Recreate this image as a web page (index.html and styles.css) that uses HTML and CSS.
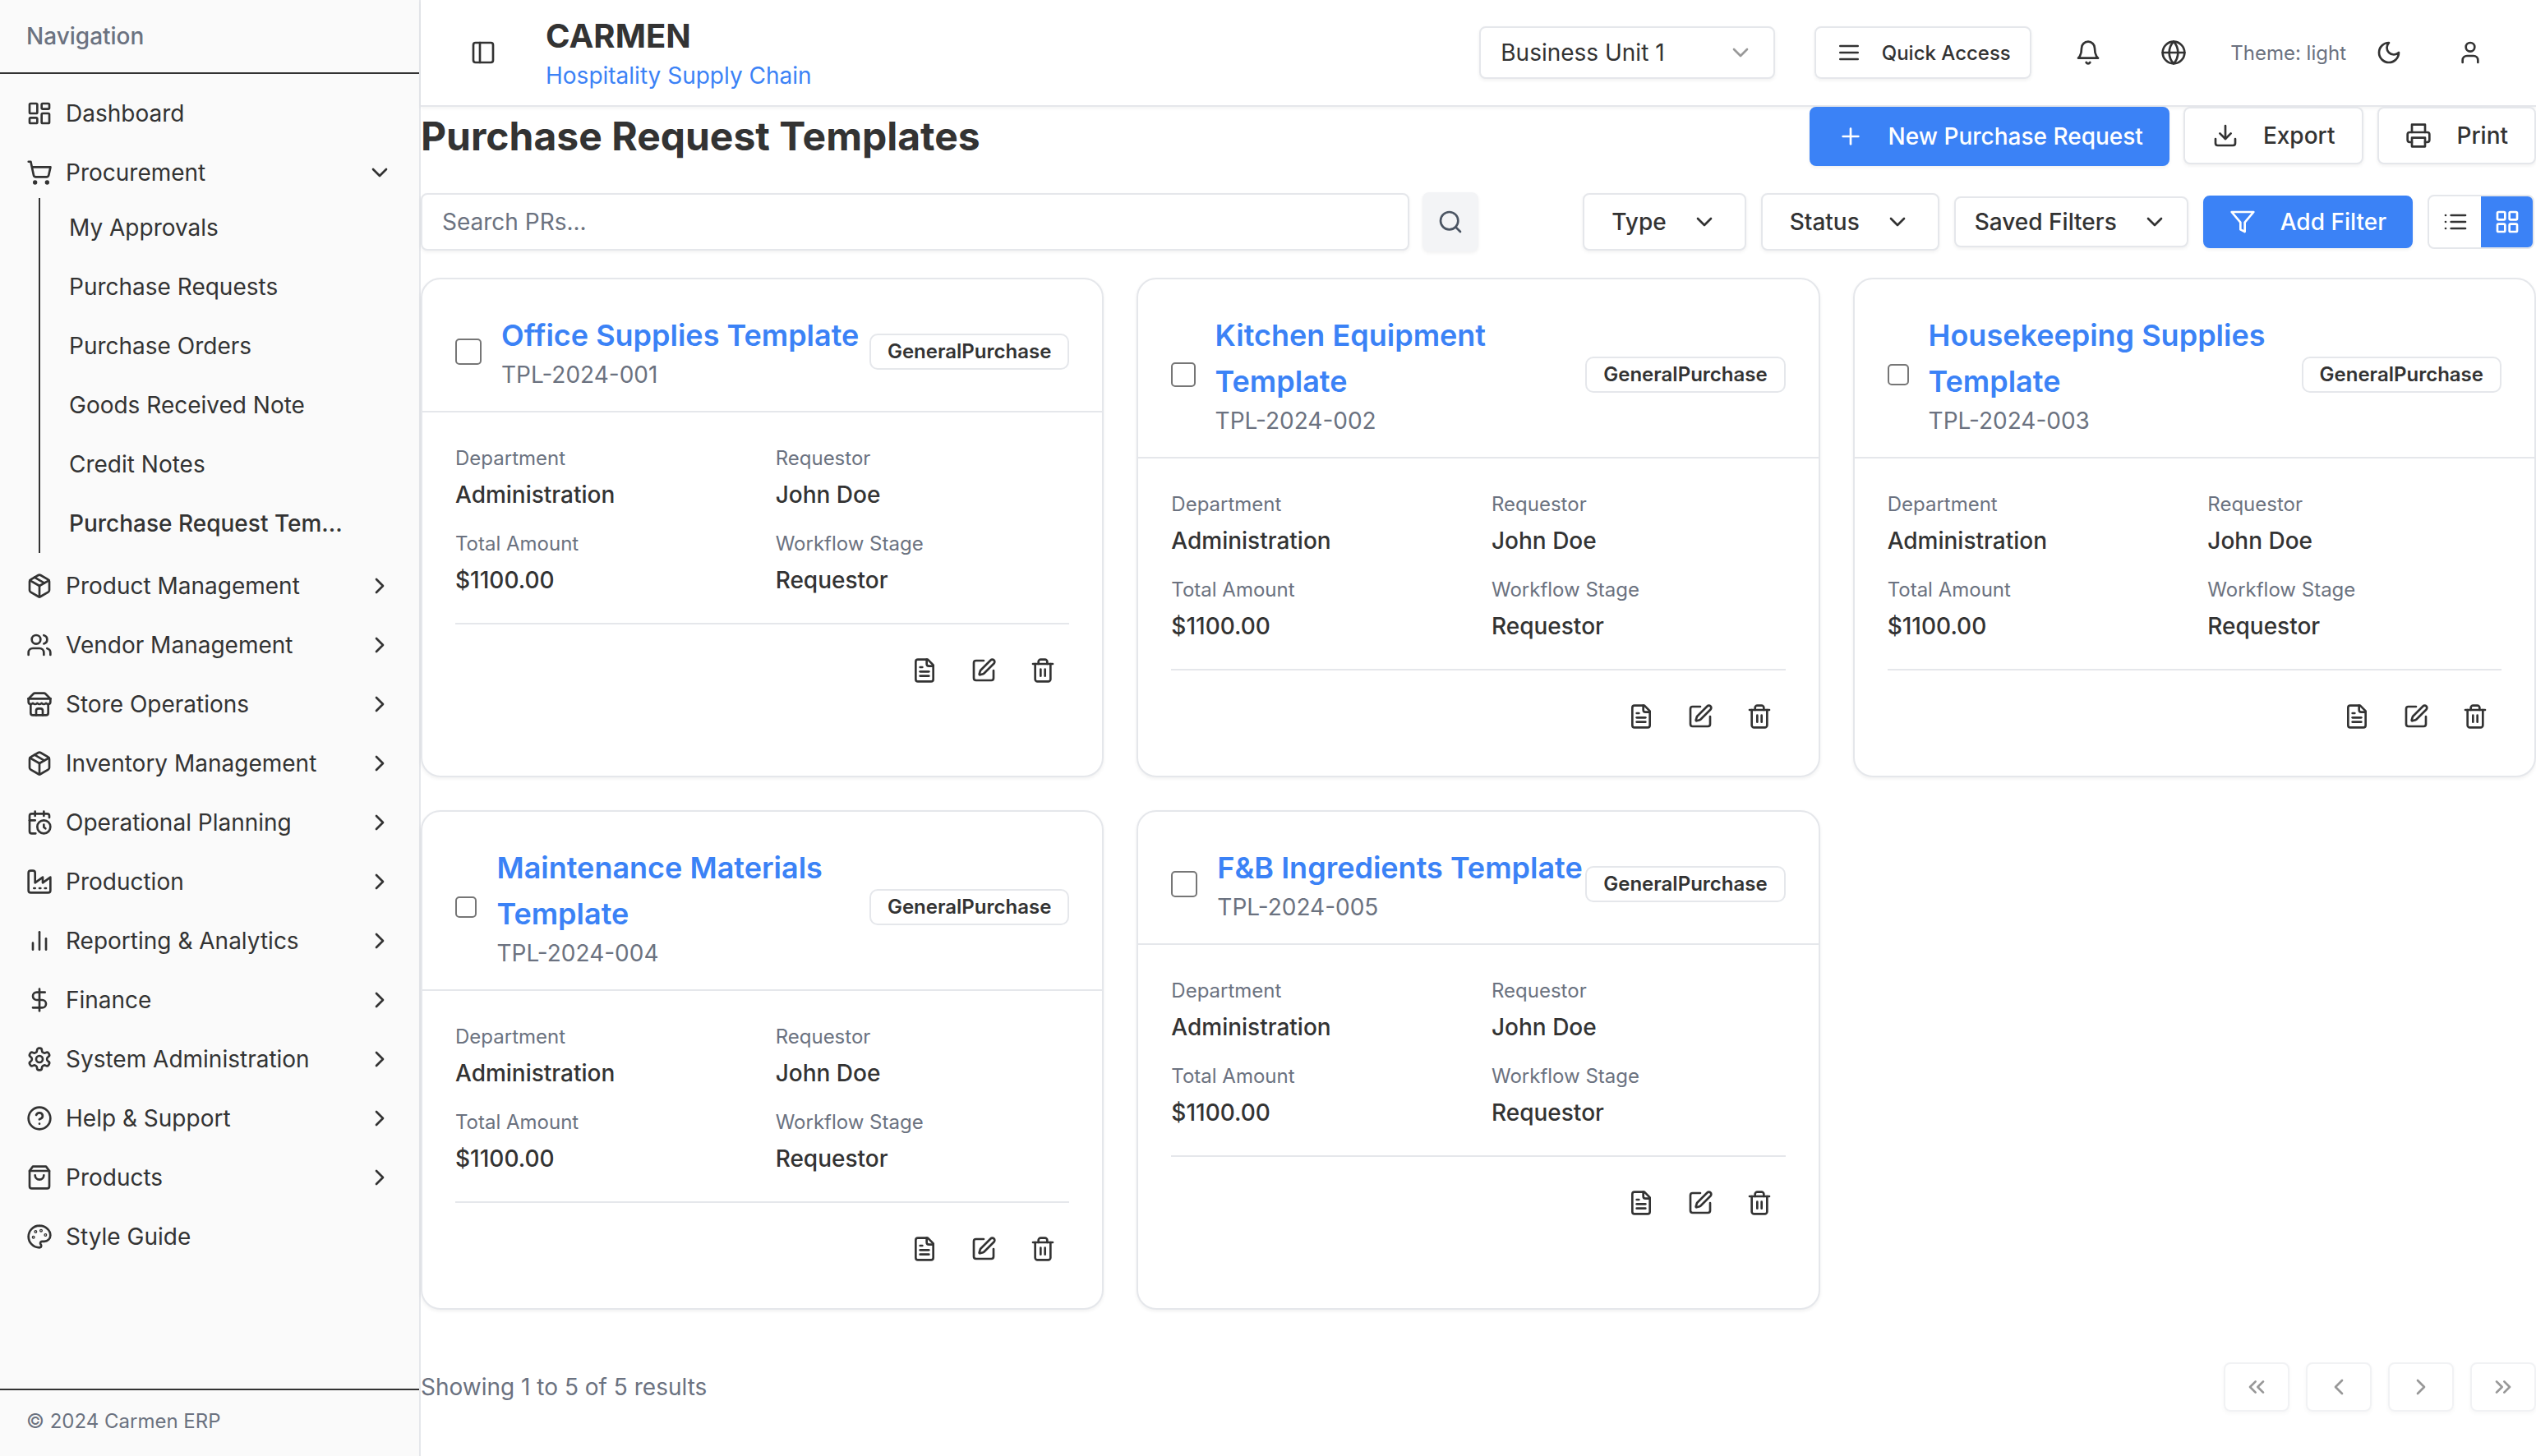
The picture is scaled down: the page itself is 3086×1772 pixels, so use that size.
FILE: index.html
```html
<!DOCTYPE html>
<html lang="en">
<head>
  <meta charset="UTF-8" />
  <title>Purchase Request Templates - Carmen</title>
  <link rel="stylesheet" href="styles.css">
</head>
<body>
  <svg class="sprite" xmlns="http://www.w3.org/2000/svg">
    <symbol id="i-dashboard" viewBox="0 0 24 24"><rect x="3" y="3" width="7" height="9" rx="1"/><rect x="14" y="3" width="7" height="5" rx="1"/><rect x="14" y="12" width="7" height="9" rx="1"/><rect x="3" y="16" width="7" height="5" rx="1"/></symbol>
    <symbol id="i-cart" viewBox="0 0 24 24"><circle cx="8" cy="21" r="1"/><circle cx="19" cy="21" r="1"/><path d="M2.05 2.05h2l2.66 12.42a2 2 0 0 0 2 1.58h9.78a2 2 0 0 0 1.95-1.57l1.65-7.43H5.12"/></symbol>
    <symbol id="i-down" viewBox="0 0 24 24"><path d="m6 9 6 6 6-6"/></symbol>
    <symbol id="i-right" viewBox="0 0 24 24"><path d="m9 18 6-6-6-6"/></symbol>
    <symbol id="i-left" viewBox="0 0 24 24"><path d="m15 18-6-6 6-6"/></symbol>
    <symbol id="i-first" viewBox="0 0 24 24"><path d="m11 17-5-5 5-5"/><path d="m18 17-5-5 5-5"/></symbol>
    <symbol id="i-last" viewBox="0 0 24 24"><path d="m6 17 5-5-5-5"/><path d="m13 17 5-5-5-5"/></symbol>
    <symbol id="i-package" viewBox="0 0 24 24"><path d="m7.5 4.27 9 5.15"/><path d="M21 8a2 2 0 0 0-1-1.73l-7-4a2 2 0 0 0-2 0l-7 4A2 2 0 0 0 3 8v8a2 2 0 0 0 1 1.73l7 4a2 2 0 0 0 2 0l7-4A2 2 0 0 0 21 16Z"/><path d="m3.3 7 8.7 5 8.7-5"/><path d="M12 22V12"/></symbol>
    <symbol id="i-users" viewBox="0 0 24 24"><path d="M16 21v-2a4 4 0 0 0-4-4H6a4 4 0 0 0-4 4v2"/><circle cx="9" cy="7" r="4"/><path d="M22 21v-2a4 4 0 0 0-3-3.87"/><path d="M16 3.13a4 4 0 0 1 0 7.75"/></symbol>
    <symbol id="i-store" viewBox="0 0 24 24"><path d="m2 7 4.41-4.41A2 2 0 0 1 7.83 2h8.34a2 2 0 0 1 1.42.59L22 7"/><path d="M4 12v8a2 2 0 0 0 2 2h12a2 2 0 0 0 2-2v-8"/><path d="M15 22v-4a2 2 0 0 0-2-2h-2a2 2 0 0 0-2 2v4"/><path d="M2 7h20"/><path d="M22 7v3a2 2 0 0 1-2 2a2.7 2.7 0 0 1-1.59-.63.7.7 0 0 0-.82 0A2.7 2.7 0 0 1 16 12a2.7 2.7 0 0 1-1.59-.63.7.7 0 0 0-.82 0A2.7 2.7 0 0 1 12 12a2.7 2.7 0 0 1-1.59-.63.7.7 0 0 0-.82 0A2.7 2.7 0 0 1 8 12a2.7 2.7 0 0 1-1.59-.63.7.7 0 0 0-.82 0A2.7 2.7 0 0 1 4 12a2 2 0 0 1-2-2V7"/></symbol>
    <symbol id="i-calendar" viewBox="0 0 24 24"><path d="M21 7.5V6a2 2 0 0 0-2-2H5a2 2 0 0 0-2 2v14a2 2 0 0 0 2 2h3.5"/><path d="M16 2v4"/><path d="M8 2v4"/><path d="M3 10h5"/><path d="M17.5 17.5 16 16.3V14"/><circle cx="16" cy="16" r="6"/></symbol>
    <symbol id="i-factory" viewBox="0 0 24 24"><path d="M2 20a2 2 0 0 0 2 2h16a2 2 0 0 0 2-2V8l-7 5V8l-7 5V4a2 2 0 0 0-2-2H4a2 2 0 0 0-2 2Z"/><path d="M17 18h1"/><path d="M12 18h1"/><path d="M7 18h1"/></symbol>
    <symbol id="i-chart" viewBox="0 0 24 24"><path d="M18 20V10"/><path d="M12 20V4"/><path d="M6 20v-6"/></symbol>
    <symbol id="i-dollar" viewBox="0 0 24 24"><path d="M12 2v20"/><path d="M17 5H9.5a3.5 3.5 0 0 0 0 7h5a3.5 3.5 0 0 1 0 7H6"/></symbol>
    <symbol id="i-settings" viewBox="0 0 24 24"><path d="M12.22 2h-.44a2 2 0 0 0-2 2v.18a2 2 0 0 1-1 1.73l-.43.25a2 2 0 0 1-2 0l-.15-.08a2 2 0 0 0-2.73.73l-.22.38a2 2 0 0 0 .73 2.73l.15.1a2 2 0 0 1 1 1.72v.51a2 2 0 0 1-1 1.74l-.15.09a2 2 0 0 0-.73 2.73l.22.38a2 2 0 0 0 2.73.73l.15-.08a2 2 0 0 1 2 0l.43.25a2 2 0 0 1 1 1.73V20a2 2 0 0 0 2 2h.44a2 2 0 0 0 2-2v-.18a2 2 0 0 1 1-1.73l.43-.25a2 2 0 0 1 2 0l.15.08a2 2 0 0 0 2.73-.73l.22-.39a2 2 0 0 0-.73-2.73l-.15-.08a2 2 0 0 1-1-1.74v-.5a2 2 0 0 1 1-1.74l.15-.09a2 2 0 0 0 .73-2.73l-.22-.38a2 2 0 0 0-2.73-.73l-.15.08a2 2 0 0 1-2 0l-.43-.25a2 2 0 0 1-1-1.73V4a2 2 0 0 0-2-2z"/><circle cx="12" cy="12" r="3"/></symbol>
    <symbol id="i-help" viewBox="0 0 24 24"><circle cx="12" cy="12" r="10"/><path d="M9.09 9a3 3 0 0 1 5.83 1c0 2-3 3-3 3"/><path d="M12 17h.01"/></symbol>
    <symbol id="i-bag" viewBox="0 0 24 24"><path d="M6 2 3 6v14a2 2 0 0 0 2 2h14a2 2 0 0 0 2-2V6l-3-4Z"/><path d="M3 6h18"/><path d="M16 10a4 4 0 0 1-8 0"/></symbol>
    <symbol id="i-palette" viewBox="0 0 24 24"><circle cx="13.5" cy="6.5" r=".5"/><circle cx="17.5" cy="10.5" r=".5"/><circle cx="8.5" cy="7.5" r=".5"/><circle cx="6.5" cy="12.5" r=".5"/><path d="M12 2C6.5 2 2 6.5 2 12s4.5 10 10 10c.926 0 1.648-.746 1.648-1.688 0-.437-.18-.835-.437-1.125-.29-.289-.438-.652-.438-1.125a1.64 1.64 0 0 1 1.668-1.668h1.996c3.051 0 5.555-2.503 5.555-5.554C21.965 6.012 17.461 2 11.996 2z"/></symbol>
    <symbol id="i-panel" viewBox="0 0 24 24"><rect x="3" y="3" width="18" height="18" rx="2"/><path d="M9 3v18"/></symbol>
    <symbol id="i-menu" viewBox="0 0 24 24"><path d="M4 6h16"/><path d="M4 12h16"/><path d="M4 18h16"/></symbol>
    <symbol id="i-bell" viewBox="0 0 24 24"><path d="M6 8a6 6 0 0 1 12 0c0 7 3 9 3 9H3s3-2 3-9"/><path d="M10.3 21a1.94 1.94 0 0 0 3.4 0"/></symbol>
    <symbol id="i-globe" viewBox="0 0 24 24"><circle cx="12" cy="12" r="10"/><path d="M12 2a14.5 14.5 0 0 0 0 20 14.5 14.5 0 0 0 0-20"/><path d="M2 12h20"/></symbol>
    <symbol id="i-moon" viewBox="0 0 24 24"><path d="M12 3a6 6 0 0 0 9 9 9 9 0 1 1-9-9Z"/></symbol>
    <symbol id="i-user" viewBox="0 0 24 24"><path d="M19 21v-2a4 4 0 0 0-4-4H9a4 4 0 0 0-4 4v2"/><circle cx="12" cy="7" r="4"/></symbol>
    <symbol id="i-plus" viewBox="0 0 24 24"><path d="M5 12h14"/><path d="M12 5v14"/></symbol>
    <symbol id="i-download" viewBox="0 0 24 24"><path d="M21 15v4a2 2 0 0 1-2 2H5a2 2 0 0 1-2-2v-4"/><path d="m7 10 5 5 5-5"/><path d="M12 15V3"/></symbol>
    <symbol id="i-printer" viewBox="0 0 24 24"><path d="M6 9V2h12v7"/><path d="M6 18H4a2 2 0 0 1-2-2v-5a2 2 0 0 1 2-2h16a2 2 0 0 1 2 2v5a2 2 0 0 1-2 2h-2"/><rect x="6" y="14" width="12" height="8"/></symbol>
    <symbol id="i-search" viewBox="0 0 24 24"><circle cx="11" cy="11" r="8"/><path d="m21 21-4.3-4.3"/></symbol>
    <symbol id="i-filter" viewBox="0 0 24 24"><path d="M22 3H2l8 9.46V19l4 2v-8.54z"/></symbol>
    <symbol id="i-list" viewBox="0 0 24 24"><path d="M8 6h13"/><path d="M8 12h13"/><path d="M8 18h13"/><path d="M3 6h.01"/><path d="M3 12h.01"/><path d="M3 18h.01"/></symbol>
    <symbol id="i-grid" viewBox="0 0 24 24"><rect x="3" y="3" width="7" height="7" rx="1"/><rect x="14" y="3" width="7" height="7" rx="1"/><rect x="14" y="14" width="7" height="7" rx="1"/><rect x="3" y="14" width="7" height="7" rx="1"/></symbol>
    <symbol id="i-file" viewBox="0 0 24 24"><path d="M15 2H6a2 2 0 0 0-2 2v16a2 2 0 0 0 2 2h12a2 2 0 0 0 2-2V7Z"/><path d="M14 2v4a2 2 0 0 0 2 2h4"/><path d="M10 9H8"/><path d="M16 13H8"/><path d="M16 17H8"/></symbol>
    <symbol id="i-edit" viewBox="0 0 24 24"><path d="M12 3H5a2 2 0 0 0-2 2v14a2 2 0 0 0 2 2h14a2 2 0 0 0 2-2v-7"/><path d="M18.375 2.625a1 1 0 0 1 3 3l-9.013 9.014a2 2 0 0 1-.853.505l-2.873.84a.5.5 0 0 1-.62-.62l.84-2.873a2 2 0 0 1 .506-.852z"/></symbol>
    <symbol id="i-trash" viewBox="0 0 24 24"><path d="M3 6h18"/><path d="M19 6v14c0 1-1 2-2 2H7c-1 0-2-1-2-2V6"/><path d="M8 6V4c0-1 1-2 2-2h4c1 0 2 1 2 2v2"/><path d="M10 11v6"/><path d="M14 11v6"/></symbol>
  </svg>

  <div class="app">
    <aside class="sidebar">
      <div class="side-head">Navigation</div>
      <nav class="side-nav">
        <a class="nav-item"><svg class="icon"><use href="#i-dashboard"/></svg><span class="nav-label">Dashboard</span></a>
        <a class="nav-item"><svg class="icon"><use href="#i-cart"/></svg><span class="nav-label">Procurement</span><svg class="icon"><use href="#i-down"/></svg></a>
        <div class="sub-nav">
          <a class="sub-item">My Approvals</a>
          <a class="sub-item">Purchase Requests</a>
          <a class="sub-item">Purchase Orders</a>
          <a class="sub-item">Goods Received Note</a>
          <a class="sub-item">Credit Notes</a>
          <a class="sub-item active">Purchase Request Tem...</a>
        </div>
        <a class="nav-item"><svg class="icon"><use href="#i-package"/></svg><span class="nav-label">Product Management</span><svg class="icon"><use href="#i-right"/></svg></a>
        <a class="nav-item"><svg class="icon"><use href="#i-users"/></svg><span class="nav-label">Vendor Management</span><svg class="icon"><use href="#i-right"/></svg></a>
        <a class="nav-item"><svg class="icon"><use href="#i-store"/></svg><span class="nav-label">Store Operations</span><svg class="icon"><use href="#i-right"/></svg></a>
        <a class="nav-item"><svg class="icon"><use href="#i-package"/></svg><span class="nav-label">Inventory Management</span><svg class="icon"><use href="#i-right"/></svg></a>
        <a class="nav-item"><svg class="icon"><use href="#i-calendar"/></svg><span class="nav-label">Operational Planning</span><svg class="icon"><use href="#i-right"/></svg></a>
        <a class="nav-item"><svg class="icon"><use href="#i-factory"/></svg><span class="nav-label">Production</span><svg class="icon"><use href="#i-right"/></svg></a>
        <a class="nav-item"><svg class="icon"><use href="#i-chart"/></svg><span class="nav-label">Reporting &amp; Analytics</span><svg class="icon"><use href="#i-right"/></svg></a>
        <a class="nav-item"><svg class="icon"><use href="#i-dollar"/></svg><span class="nav-label">Finance</span><svg class="icon"><use href="#i-right"/></svg></a>
        <a class="nav-item"><svg class="icon"><use href="#i-settings"/></svg><span class="nav-label">System Administration</span><svg class="icon"><use href="#i-right"/></svg></a>
        <a class="nav-item"><svg class="icon"><use href="#i-help"/></svg><span class="nav-label">Help &amp; Support</span><svg class="icon"><use href="#i-right"/></svg></a>
        <a class="nav-item"><svg class="icon"><use href="#i-bag"/></svg><span class="nav-label">Products</span><svg class="icon"><use href="#i-right"/></svg></a>
        <a class="nav-item"><svg class="icon"><use href="#i-palette"/></svg><span class="nav-label">Style Guide</span></a>
      </nav>
      <div class="side-foot">© 2024 Carmen ERP</div>
    </aside>

    <div class="page">
      <header class="topbar">
        <button class="toggle"><svg class="icon"><use href="#i-panel"/></svg></button>
        <div class="brand">
          <div class="brand-name">CARMEN</div>
          <div class="brand-sub">Hospitality Supply Chain</div>
        </div>
        <div class="top-right">
          <div class="unit-select">Business Unit 1<svg class="icon"><use href="#i-down"/></svg></div>
          <button class="quick"><svg class="icon"><use href="#i-menu"/></svg>Quick Access</button>
          <svg class="icon bell"><use href="#i-bell"/></svg>
          <svg class="icon globe"><use href="#i-globe"/></svg>
          <span class="theme-label">Theme: light</span>
          <svg class="icon moon"><use href="#i-moon"/></svg>
          <svg class="icon person"><use href="#i-user"/></svg>
        </div>
      </header>

      <main class="content">
        <div class="title-row">
          <h1>Purchase Request Templates</h1>
          <div class="actions">
            <button class="btn primary"><svg class="icon"><use href="#i-plus"/></svg>New Purchase Request</button>
            <button class="btn export"><svg class="icon"><use href="#i-download"/></svg>Export</button>
            <button class="btn"><svg class="icon"><use href="#i-printer"/></svg>Print</button>
          </div>
        </div>

        <div class="toolbar">
          <input class="search" type="text" placeholder="Search PRs..." />
          <button class="search-btn"><svg class="icon"><use href="#i-search"/></svg></button>
          <div class="filters">
            <button class="btn filter">Type<svg class="icon"><use href="#i-down"/></svg></button>
            <button class="btn filter">Status<svg class="icon"><use href="#i-down"/></svg></button>
            <button class="btn filter saved">Saved Filters<svg class="icon"><use href="#i-down"/></svg></button>
            <button class="btn filter add"><svg class="icon"><use href="#i-filter"/></svg>Add Filter</button>
            <div class="view-toggle">
              <span class="view-btn"><svg class="icon"><use href="#i-list"/></svg></span>
              <span class="view-btn on"><svg class="icon"><use href="#i-grid"/></svg></span>
            </div>
          </div>
        </div>

        <section class="cards">
          <article class="card">
            <div class="card-head">
              <div class="card-title">
                <input class="check" type="checkbox" />
                <div class="card-name">
                  <a class="name">Office Supplies Template</a>
                  <div class="code">TPL-2024-001</div>
                </div>
              </div>
              <span class="badge">GeneralPurchase</span>
            </div>
            <div class="card-body">
              <dl class="facts">
                <div><dt>Department</dt><dd>Administration</dd></div>
                <div><dt>Requestor</dt><dd>John Doe</dd></div>
                <div><dt>Total Amount</dt><dd>$1100.00</dd></div>
                <div><dt>Workflow Stage</dt><dd>Requestor</dd></div>
              </dl>
              <div class="card-actions">
                <button class="icon-btn"><svg class="icon"><use href="#i-file"/></svg></button>
                <button class="icon-btn"><svg class="icon"><use href="#i-edit"/></svg></button>
                <button class="icon-btn"><svg class="icon"><use href="#i-trash"/></svg></button>
              </div>
            </div>
          </article>

          <article class="card">
            <div class="card-head">
              <div class="card-title">
                <input class="check" type="checkbox" />
                <div class="card-name">
                  <a class="name">Kitchen Equipment Template</a>
                  <div class="code">TPL-2024-002</div>
                </div>
              </div>
              <span class="badge">GeneralPurchase</span>
            </div>
            <div class="card-body">
              <dl class="facts">
                <div><dt>Department</dt><dd>Administration</dd></div>
                <div><dt>Requestor</dt><dd>John Doe</dd></div>
                <div><dt>Total Amount</dt><dd>$1100.00</dd></div>
                <div><dt>Workflow Stage</dt><dd>Requestor</dd></div>
              </dl>
              <div class="card-actions">
                <button class="icon-btn"><svg class="icon"><use href="#i-file"/></svg></button>
                <button class="icon-btn"><svg class="icon"><use href="#i-edit"/></svg></button>
                <button class="icon-btn"><svg class="icon"><use href="#i-trash"/></svg></button>
              </div>
            </div>
          </article>

          <article class="card">
            <div class="card-head">
              <div class="card-title">
                <input class="check" type="checkbox" />
                <div class="card-name">
                  <a class="name">Housekeeping Supplies Template</a>
                  <div class="code">TPL-2024-003</div>
                </div>
              </div>
              <span class="badge">GeneralPurchase</span>
            </div>
            <div class="card-body">
              <dl class="facts">
                <div><dt>Department</dt><dd>Administration</dd></div>
                <div><dt>Requestor</dt><dd>John Doe</dd></div>
                <div><dt>Total Amount</dt><dd>$1100.00</dd></div>
                <div><dt>Workflow Stage</dt><dd>Requestor</dd></div>
              </dl>
              <div class="card-actions">
                <button class="icon-btn"><svg class="icon"><use href="#i-file"/></svg></button>
                <button class="icon-btn"><svg class="icon"><use href="#i-edit"/></svg></button>
                <button class="icon-btn"><svg class="icon"><use href="#i-trash"/></svg></button>
              </div>
            </div>
          </article>

          <article class="card">
            <div class="card-head">
              <div class="card-title">
                <input class="check" type="checkbox" />
                <div class="card-name">
                  <a class="name">Maintenance Materials Template</a>
                  <div class="code">TPL-2024-004</div>
                </div>
              </div>
              <span class="badge">GeneralPurchase</span>
            </div>
            <div class="card-body">
              <dl class="facts">
                <div><dt>Department</dt><dd>Administration</dd></div>
                <div><dt>Requestor</dt><dd>John Doe</dd></div>
                <div><dt>Total Amount</dt><dd>$1100.00</dd></div>
                <div><dt>Workflow Stage</dt><dd>Requestor</dd></div>
              </dl>
              <div class="card-actions">
                <button class="icon-btn"><svg class="icon"><use href="#i-file"/></svg></button>
                <button class="icon-btn"><svg class="icon"><use href="#i-edit"/></svg></button>
                <button class="icon-btn"><svg class="icon"><use href="#i-trash"/></svg></button>
              </div>
            </div>
          </article>

          <article class="card">
            <div class="card-head">
              <div class="card-title">
                <input class="check" type="checkbox" />
                <div class="card-name">
                  <a class="name">F&amp;B Ingredients Template</a>
                  <div class="code">TPL-2024-005</div>
                </div>
              </div>
              <span class="badge">GeneralPurchase</span>
            </div>
            <div class="card-body">
              <dl class="facts">
                <div><dt>Department</dt><dd>Administration</dd></div>
                <div><dt>Requestor</dt><dd>John Doe</dd></div>
                <div><dt>Total Amount</dt><dd>$1100.00</dd></div>
                <div><dt>Workflow Stage</dt><dd>Requestor</dd></div>
              </dl>
              <div class="card-actions">
                <button class="icon-btn"><svg class="icon"><use href="#i-file"/></svg></button>
                <button class="icon-btn"><svg class="icon"><use href="#i-edit"/></svg></button>
                <button class="icon-btn"><svg class="icon"><use href="#i-trash"/></svg></button>
              </div>
            </div>
          </article>
        </section>

        <div class="pager">
          <span class="pager-text">Showing 1 to 5 of 5 results</span>
          <div class="pager-btns">
            <button class="page-btn"><svg class="icon"><use href="#i-first"/></svg></button>
            <button class="page-btn"><svg class="icon"><use href="#i-left"/></svg></button>
            <button class="page-btn"><svg class="icon"><use href="#i-right"/></svg></button>
            <button class="page-btn"><svg class="icon"><use href="#i-last"/></svg></button>
          </div>
        </div>
      </main>
    </div>
  </div>
</body>
</html>
```

FILE: styles.css
```css
* { box-sizing: border-box; }
html, body { height: 100%; }
body {
  margin: 0;
  font-family: "Inter", "Liberation Sans", sans-serif;
  font-size: 28px;
  color: #333;
  background: #fff;
  overflow: hidden;
}
button, input { font: inherit; color: inherit; }
button { background: none; border: none; padding: 0; cursor: pointer; }
.sprite { display: none; }
.icon {
  width: 32px;
  height: 32px;
  flex: none;
  fill: none;
  stroke: currentColor;
  stroke-width: 2;
  stroke-linecap: round;
  stroke-linejoin: round;
}
.app { display: flex; height: 1772px; }

/* sidebar */
.sidebar {
  width: 512px;
  flex: none;
  display: flex;
  flex-direction: column;
  background: #fafafa;
  border-right: 2px solid #e5e7eb;
}
.side-head {
  height: 90px;
  padding: 26px 32px 0;
  line-height: 36px;
  font-weight: 500;
  color: #6b7280;
  border-bottom: 2px solid #333;
}
.side-nav { flex: 1; padding: 12px 16px 0; }
.nav-item {
  display: flex;
  align-items: center;
  gap: 16px;
  height: 72px;
  padding: 0 16px;
}
.nav-label { flex: 1; }
.sub-nav {
  margin: -5px 0 4px 31px;
  border-left: 2px solid #333;
  padding-left: 35px;
}
.sub-item {
  display: block;
  height: 72px;
  line-height: 72px;
  white-space: nowrap;
}
.sub-item.active { font-weight: 500; }
.side-foot {
  height: 82px;
  padding: 22px 32px 0;
  line-height: 32px;
  font-size: 24px;
  color: #6b7280;
  border-top: 2px solid #333;
}

/* top bar */
.page { flex: 1; min-width: 0; display: flex; flex-direction: column; }
.topbar {
  height: 130px;
  flex: none;
  display: flex;
  align-items: center;
  padding-left: 44px;
  border-bottom: 2px solid #e5e7eb;
  box-shadow: 0 2px 4px rgba(0, 0, 0, 0.05);
}
.toggle { width: 64px; height: 64px; display: flex; align-items: center; justify-content: center; }
.brand { margin-left: 44px; }
.brand-name { font-size: 40px; line-height: 56px; font-weight: 700; }
.brand-sub { line-height: 40px; color: #3b82f6; }
.top-right { margin-left: auto; display: flex; align-items: center; }
.unit-select {
  width: 360px;
  height: 64px;
  display: flex;
  align-items: center;
  justify-content: space-between;
  padding: 0 24px;
  background: #fff;
  border: 2px solid #e5e7eb;
  border-radius: 8px;
  box-shadow: 0 2px 4px rgba(0, 0, 0, 0.06);
}
.unit-select .icon { color: #999; }
.quick {
  width: 264px;
  height: 64px;
  margin-left: 48px;
  display: flex;
  align-items: center;
  justify-content: center;
  gap: 24px;
  font-size: 24px;
  font-weight: 500;
  border: 2px solid #e5e7eb;
  border-radius: 8px;
  box-shadow: 0 2px 4px rgba(0, 0, 0, 0.06);
}
.bell { margin-left: 53px; }
.globe { margin-left: 72px; }
.theme-label { margin-left: 53px; font-size: 24px; color: #6b7280; }
.moon { margin-left: 36px; }
.person { margin-left: 67px; margin-right: 64px; }

/* main */
.content { flex: 1; min-height: 0; display: flex; flex-direction: column; }
.title-row { display: flex; align-items: center; justify-content: space-between; }
h1 { margin: 0; font-size: 48px; line-height: 72px; font-weight: 700; }
.actions { display: flex; gap: 17px; }
.btn {
  height: 72px;
  display: flex;
  align-items: center;
  gap: 30px;
  padding: 0 32px;
  font-weight: 500;
  background: #fff;
  border: 2px solid #e5e7eb;
  border-radius: 8px;
  box-shadow: 0 2px 4px rgba(0, 0, 0, 0.06);
  white-space: nowrap;
}
.actions .btn { height: 70px; }
.actions .export { padding: 0 33px; }
.actions .primary {
  height: 72px;
  padding: 0 30px 0 32px;
  color: #fff;
  background: #3b82f6;
  border-color: #3b82f6;
}
.toolbar { display: flex; align-items: center; margin-top: 32px; gap: 16px; }
.search {
  flex: 1;
  min-width: 0;
  height: 70px;
  padding: 0 24px;
  background: #fff;
  border: 2px solid #e5e7eb;
  border-radius: 8px;
  box-shadow: 0 2px 4px rgba(0, 0, 0, 0.06);
  outline: none;
}
.search::placeholder { color: #6b7280; }
.search-btn {
  width: 68px;
  height: 72px;
  display: flex;
  align-items: center;
  justify-content: center;
  color: #4b5563;
  background: #f3f4f6;
  border-radius: 8px;
  box-shadow: 0 2px 4px rgba(0, 0, 0, 0.06);
}
.filters { display: flex; align-items: center; gap: 18px; margin-left: 111px; }
.btn.filter { height: 70px; padding: 0 33px; }
.btn.saved { height: 62px; padding: 0 23px; }
.btn.add {
  height: 64px;
  padding: 0 30px;
  color: #fff;
  background: #3b82f6;
  border-color: #3b82f6;
}
.view-toggle {
  width: 130px;
  height: 66px;
  display: flex;
  margin-right: 2px;
  background: #fff;
  border: 2px solid #e5e7eb;
  border-radius: 8px;
  overflow: hidden;
}
.view-btn { flex: 1; display: flex; align-items: center; justify-content: center; }
.view-btn.on { color: #fff; background: #3b82f6; }

/* cards */
.cards {
  display: grid;
  grid-template-columns: repeat(3, 1fr);
  gap: 40px;
  margin-top: 32px;
}
.card {
  display: flex;
  flex-direction: column;
  background: #fff;
  border: 2px solid #e5e7eb;
  border-radius: 24px;
  box-shadow: 0 2px 4px rgba(0, 0, 0, 0.06);
}
.card-head {
  display: flex;
  align-items: center;
  justify-content: space-between;
  padding: 40px 40px 24px;
  border-bottom: 2px solid #e5e7eb;
}
.card-title { display: flex; align-items: center; gap: 24px; min-width: 0; }
.check {
  flex: 0 1 32px;
  width: 32px;
  aspect-ratio: 1;
  margin: 0;
  appearance: none;
  background: #fff;
  border: 2px solid #767676;
  border-radius: 5px;
}
.name {
  display: block;
  font-size: 36px;
  line-height: 56px;
  font-weight: 600;
  color: #3b82f6;
}
.code { line-height: 40px; color: #6b7280; }
.badge {
  flex: none;
  height: 44px;
  padding: 0 20px;
  line-height: 40px;
  font-size: 24px;
  font-weight: 600;
  border: 2px solid #e5e7eb;
  border-radius: 10px;
}
.card-body { padding: 40px 40px 40px; }
.facts {
  display: grid;
  grid-template-columns: 1fr 1fr;
  gap: 24px 32px;
  margin: 0;
  padding-bottom: 32px;
  border-bottom: 2px solid #e5e7eb;
}
dt { font-size: 24px; line-height: 32px; color: #6b7280; }
dd { margin: 8px 0 0; line-height: 40px; font-weight: 500; }
.card-actions { display: flex; justify-content: flex-end; gap: 8px; margin-top: 24px; }
.icon-btn { width: 64px; height: 64px; display: flex; align-items: center; justify-content: center; }

/* pager */
.pager { display: flex; align-items: center; justify-content: space-between; margin-top: 64px; }
.pager-text { color: #6b7280; }
.pager-btns { display: flex; gap: 20px; }
.page-btn {
  width: 80px;
  height: 60px;
  display: flex;
  align-items: center;
  justify-content: center;
  border: 2px solid #e5e7eb;
  border-radius: 8px;
  box-shadow: 0 2px 4px rgba(0, 0, 0, 0.06);
  opacity: 0.5;
}
```
